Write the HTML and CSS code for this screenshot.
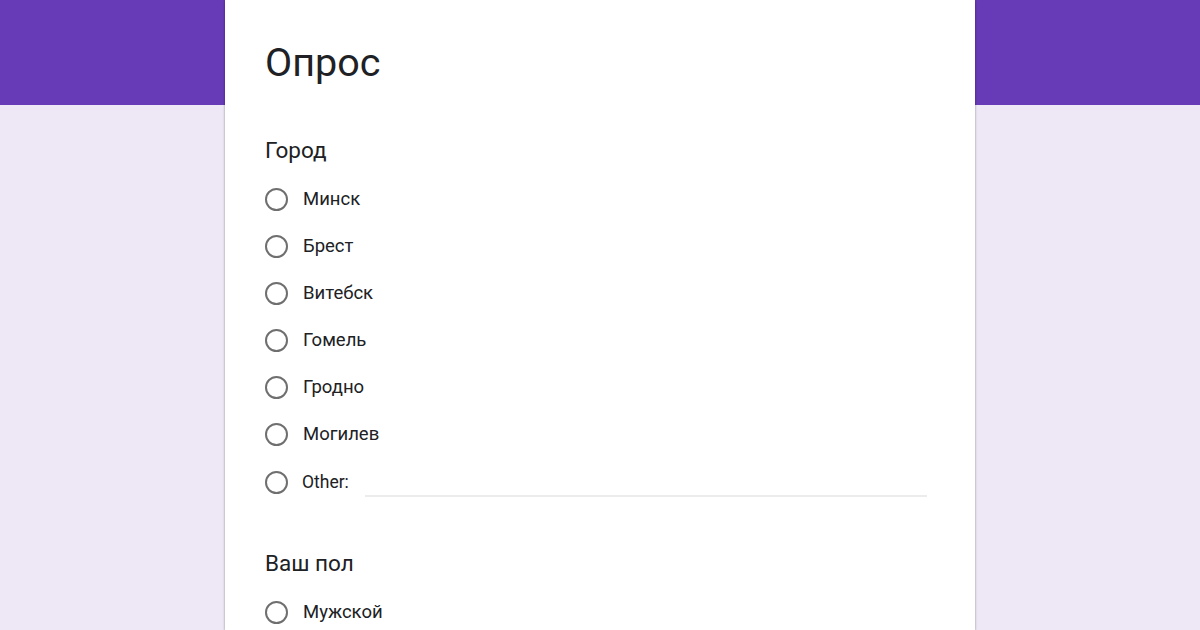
FILE: index.html
```html
<!DOCTYPE html>
<html lang="ru">
<head>
    <meta charset="UTF-8">
    <meta name="viewport" content="width=device-width, initial-scale=1.0">
    <title>Опрос</title>
    <link rel="stylesheet" href="styles.css">
</head>
<body>
    <div class="header-band"></div>
    <div class="form-card">
        <h1 class="form-title">Опрос</h1>

        <div class="question">
            <div class="question-title">Город</div>
            <div class="options">
                <label class="option"><span class="radio"></span><span class="label">Минск</span></label>
                <label class="option"><span class="radio"></span><span class="label">Брест</span></label>
                <label class="option"><span class="radio"></span><span class="label">Витебск</span></label>
                <label class="option"><span class="radio"></span><span class="label">Гомель</span></label>
                <label class="option"><span class="radio"></span><span class="label">Гродно</span></label>
                <label class="option"><span class="radio"></span><span class="label">Могилев</span></label>
                <label class="option other"><span class="radio"></span><span class="label">Other:</span><span class="other-input"></span></label>
            </div>
        </div>

        <div class="question">
            <div class="question-title">Ваш пол</div>
            <div class="options">
                <label class="option"><span class="radio"></span><span class="label">Мужской</span></label>
            </div>
        </div>
    </div>
</body>
</html>
```

FILE: styles.css
```css
* {
    margin: 0;
    padding: 0;
    box-sizing: border-box;
}

body {
    background: #ede7f6;
    font-family: Roboto, "Liberation Sans", sans-serif;
    color: #202124;
    height: 630px;
    overflow: hidden;
    position: relative;
}

.header-band {
    background: #673ab7;
    height: 105px;
}

.form-card {
    position: absolute;
    top: 0;
    left: 225px;
    width: 750px;
    height: 630px;
    background: #fff;
    box-shadow: 0 0 2px rgba(0, 0, 0, 0.25), 0 1px 3px rgba(0, 0, 0, 0.15);
    padding: 38px 40px 0 40px;
}

.form-title {
    font-size: 39.5px;
    font-weight: 400;
    line-height: 50px;
    color: #202124;
}

.question {
    margin-top: 47px;
}

.question + .question {
    margin-top: 54px;
}

.question-title {
    font-size: 22.5px;
    line-height: 30px;
    color: #202124;
}

.options {
    margin-top: 22px;
    display: flex;
    flex-direction: column;
    gap: 23px;
}

.option {
    display: flex;
    align-items: center;
    height: 24px;
}

.radio {
    width: 23px;
    height: 23px;
    border: 2px solid #6f6f6f;
    border-radius: 50%;
    flex-shrink: 0;
}

.label {
    margin-left: 15px;
    font-size: 18.5px;
    color: #202124;
}

.other .label {
    font-size: 17.5px;
    margin-left: 14px;
}

.other {
    margin-top: 1px;
}

.other-input {
    flex: 1;
    margin-left: 16px;
    margin-right: 8px;
    height: 24px;
    border-bottom: 2px solid #ececec;
    transform: translateY(3px);
}
```
